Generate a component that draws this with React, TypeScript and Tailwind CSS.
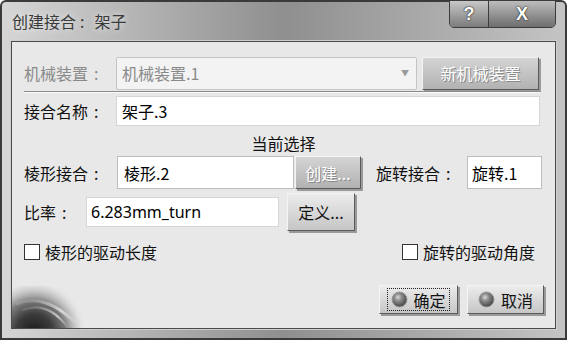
import React from "react";

const cjk = { fontFamily: '"Noto Sans CJK SC", "Liberation Sans", sans-serif' };

function Ball() {
  return (
    <svg width="17" height="17" viewBox="0 0 17 17" className="shrink-0">
      <defs>
        <radialGradient id="ballg" cx="0.4" cy="0.35" r="0.7">
          <stop offset="0" stopColor="#d8d8d8" />
          <stop offset="0.35" stopColor="#8c8c8c" />
          <stop offset="1" stopColor="#3e3e3e" />
        </radialGradient>
      </defs>
      <circle cx="8.5" cy="8.5" r="7.5" fill="url(#ballg)" stroke="#9a9a9a" strokeWidth="1" />
    </svg>
  );
}

function Swirl() {
  return (
    <svg width="90" height="42" viewBox="0 0 90 42" className="absolute left-0 bottom-0">
      <defs>
        <radialGradient id="sw" gradientUnits="userSpaceOnUse" cx="22" cy="46" r="52">
          <stop offset="0" stopColor="#1a1a1a" />
          <stop offset="0.35" stopColor="#3c3c3c" />
          <stop offset="0.6" stopColor="#7a7a7a" />
          <stop offset="0.85" stopColor="#c4c4c4" stopOpacity="0.5" />
          <stop offset="1" stopColor="#e8e8e8" stopOpacity="0" />
        </radialGradient>
        <linearGradient id="swl" x1="0" y1="0" x2="1" y2="1">
          <stop offset="0" stopColor="#ffffff" stopOpacity="0.05" />
          <stop offset="0.6" stopColor="#f0f0f0" stopOpacity="0.7" />
          <stop offset="1" stopColor="#ffffff" stopOpacity="0" />
        </linearGradient>
      </defs>
      <rect x="0" y="0" width="90" height="42" fill="url(#sw)" />
      <path d="M4 18 Q34 6 64 38" stroke="url(#swl)" strokeWidth="3" fill="none" />
      <path d="M10 24 Q36 14 56 42" stroke="url(#swl)" strokeWidth="2" fill="none" />
    </svg>
  );
}

function Label({ text, className = "" }: { text: string; className?: string }) {
  return (
    <span className={"flex items-center " + className}>
      {text}
      <span className="ml-[6px]">:</span>
    </span>
  );
}

function Bevel({ children, className = "", disabled = false }: { children: React.ReactNode; className?: string; disabled?: boolean }) {
  return (
    <div
      className={
        "flex items-center justify-center border border-t-[#f4f4f4] border-l-[#f4f4f4] border-r-[#5a5a5a] border-b-[#5a5a5a] shadow-[2px_2px_0_#9a9a9a] " +
        (disabled
          ? "bg-gradient-to-b from-[#d4d4d4] to-[#b2b2b2] text-white [text-shadow:1px_1px_0_#8a8a8a] "
          : "bg-gradient-to-b from-[#ececec] to-[#c6c6c6] text-[#111] ") +
        className
      }
    >
      {children}
    </div>
  );
}

export default function App() {
  return (
    <div className="w-[567px] h-[340px] overflow-hidden bg-white" style={cjk}>
      <div className="relative flex flex-col w-[567px] h-[340px] rounded-t-[6px] border-2 border-[#3a3a3a] bg-gradient-to-r from-[#d6d6d6] via-[#8f8f8f] to-[#c4c4c4]">
        {/* title bar */}
        <div className="relative h-[39px] shrink-0 flex items-start">
          <span className="mt-[7px] ml-[10px] text-[16px] text-[#3a3a3a] [text-shadow:0_0_6px_#f0f0f0]">
            创建接合<span className="ml-[4px] mr-[10px]">:</span>架子
          </span>
          <div className="absolute right-[9px] top-[-2px] flex h-[28px] rounded-b-[5px] border border-[#3c3c3c] overflow-hidden">
            <div className="w-[39px] flex items-center justify-center bg-gradient-to-b from-[#c8c8c8] to-[#7c7c7c] border-r border-[#3c3c3c] text-[18px] font-bold text-white [text-shadow:0_0_2px_#222,0_0_1px_#222]" style={{ fontFamily: '"Liberation Sans", sans-serif' }}>
              ?
            </div>
            <div className="w-[66px] flex items-center justify-center bg-gradient-to-b from-[#bdbdbd] to-[#6e6e6e] text-[18px] font-bold text-white [text-shadow:0_0_2px_#222,0_0_1px_#222]" style={{ fontFamily: '"Liberation Sans", sans-serif' }}>
              X
            </div>
          </div>
        </div>

        {/* client area */}
        <div className="relative mx-[9px] mb-[9px] flex-1 border border-[#4a4a4a] bg-[#e8e8e8] shadow-[0_0_0_1px_#cfcfcf] text-[16px] leading-none">
          <Swirl />
          <div className="relative flex flex-col pl-[12px] pt-[14px]">
            {/* row 1 */}
            <div className="flex items-center h-[34px]">
              <Label text="机械装置" className="w-[92px] text-[#8a8a8a]" />
              <div className="w-[301px] h-[33px] flex items-center justify-between px-[5px] bg-[#f3f3f3] border border-[#c4c4c4] rounded-[2px] text-[#8a8a8a]">
                <span>机械装置.1</span>
                <span className="text-[8px] text-[#9a9a9a] mr-[2px]">▼</span>
              </div>
              <Bevel disabled className="ml-[5px] w-[117px] h-[33px]">新机械装置</Bevel>
            </div>
            <div className="mt-[1px] w-[516px] h-[2px] border-t border-[#8a8a8a] border-b border-b-[#fafafa]" />

            {/* row 2 */}
            <div className="flex items-center mt-[3px] h-[30px]">
              <Label text="接合名称" className="w-[92px] text-[#111]" />
              <div className="w-[424px] h-[30px] flex items-center px-[5px] bg-white border border-[#d6d6d6]">架子.3</div>
            </div>

            <div className="mt-[9px] pr-[12px] h-[16px] flex justify-center text-[#111]">当前选择</div>

            {/* row 3 */}
            <div className="flex items-center mt-[5px] h-[33px]">
              <Label text="棱形接合" className="w-[93px] text-[#111]" />
              <div className="w-[177px] h-[33px] flex items-center px-[6px] bg-white border border-[#bdbdbd]">棱形.2</div>
              <Bevel disabled className="ml-[1px] w-[66px] h-[33px]">创建...</Bevel>
              <Label text="旋转接合" className="ml-[15px] w-[91px] text-[#111]" />
              <div className="w-[75px] h-[33px] flex items-center px-[4px] bg-white border border-[#bdbdbd]">旋转.1</div>
            </div>

            {/* row 4 */}
            <div className="flex items-center mt-[3px] h-[39px]">
              <Label text="比率" className="w-[62px] text-[#111]" />
              <div className="w-[193px] h-[30px] flex items-center px-[4px] bg-white border border-[#d6d6d6]" style={{ fontFamily: '"Noto Sans", "Noto Sans CJK SC", sans-serif' }}>
                6.283mm_turn
              </div>
              <Bevel className="ml-[8px] w-[68px] h-[38px]">定义...</Bevel>
            </div>

            {/* row 5 */}
            <div className="flex items-center justify-between mt-[12px] pr-[20px] h-[18px]">
              <label className="flex items-center gap-[5px] text-[#111]">
                <span className="w-[16px] h-[16px] border border-[#333] bg-white" />
                棱形的驱动长度
              </label>
              <label className="flex items-center gap-[5px] text-[#111]">
                <span className="w-[16px] h-[16px] border border-[#333] bg-white" />
                旋转的驱动角度
              </label>
            </div>

            {/* row 6 */}
            <div className="flex justify-end gap-[9px] mt-[24px] pr-[11px]">
              <Bevel className="w-[79px] h-[29px] gap-[5px]">
                <div className="flex items-center gap-[5px] px-[3px] py-[2px] border border-dotted border-[#222]">
                  <Ball />
                  <span>确定</span>
                </div>
              </Bevel>
              <Bevel className="w-[77px] h-[29px] gap-[6px]">
                <Ball />
                <span>取消</span>
              </Bevel>
            </div>
          </div>
        </div>
      </div>
    </div>
  );
}
